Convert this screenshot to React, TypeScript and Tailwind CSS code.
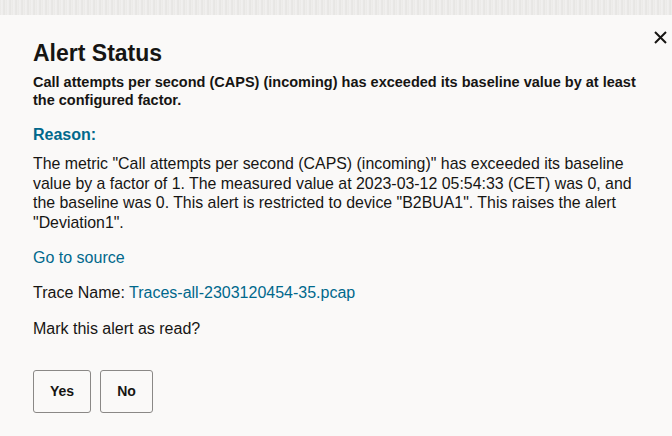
import React from "react";

const App = () => {
  return (
    <div className="w-[672px] h-[436px] overflow-hidden flex flex-col bg-[#faf9f8] text-[#161513] font-['Liberation_Sans',Arial,sans-serif]">
      {/* blurred page behind the dialog */}
      <div className="h-[15px] shrink-0 bg-[repeating-linear-gradient(90deg,#e9e8e6_0px,#f3f2f1_2px,#e4e3e1_4px,#f1f0ee_6px)]" />

      <div className="relative flex-1 pl-[33px] pr-[20px]">
        <button className="absolute right-[4px] top-[14px] w-[16px] h-[16px] flex items-center justify-center text-[#161513]">
          <svg width="13" height="13" viewBox="0 0 13 13" fill="none">
            <path d="M1 1L12 12M12 1L1 12" stroke="currentColor" strokeWidth="2" />
          </svg>
        </button>

        <h1 className="mt-[25px] text-[23px] leading-[26px] font-bold">Alert Status</h1>

        <p className="mt-[7px] text-[14.5px] leading-[18px] font-bold">
          Call attempts per second (CAPS) (incoming) has exceeded its baseline value by at least the configured factor.
        </p>

        <h2 className="mt-[16px] text-[16px] leading-[20px] font-bold text-[#00688c]">Reason:</h2>

        <p className="mt-[9px] text-[15.9px] leading-[19.5px]">
          The metric "Call attempts per second (CAPS) (incoming)" has exceeded its baseline value by a factor of 1. The measured value at 2023-03-12 05:54:33 (CET) was 0, and the baseline was 0. This alert is restricted to device "B2BUA1". This raises the alert "Deviation1".
        </p>

        <a className="block mt-[16px] text-[16px] leading-[20px] text-[#00688c]">Go to source</a>

        <p className="mt-[15px] text-[16px] leading-[20px]">
          Trace Name: <span className="text-[#00688c]">Traces-all-2303120454-35.pcap</span>
        </p>

        <p className="mt-[16px] text-[16px] leading-[20px]">Mark this alert as read?</p>

        <div className="mt-[31px] flex gap-[9px]">
          <button className="h-[43px] px-[16px] border border-[#8a8886] rounded-[3px] bg-[#faf9f8] text-[14px] font-bold">
            Yes
          </button>
          <button className="h-[43px] px-[16px] border border-[#8a8886] rounded-[3px] bg-[#faf9f8] text-[14px] font-bold">
            No
          </button>
        </div>
      </div>
    </div>
  );
};

export default App;
